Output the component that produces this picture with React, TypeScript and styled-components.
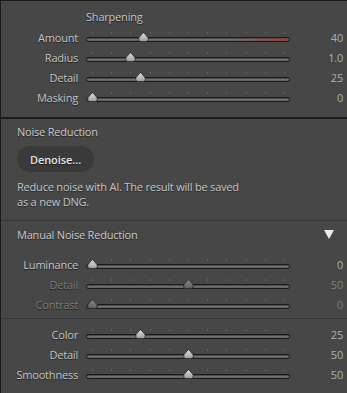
import React, { FC } from 'react';
import styled, { createGlobalStyle } from 'styled-components';

const fontFamily = '"Open Sans", "Noto Sans", Arial, sans-serif';
const panelBg = '#474747';
const edge = '#1c1c1c';
const labelColor = '#c2c5c9';
const dimColor = '#7c7c7c';
const valueColor = '#aab0b7';

const GlobalStyle = createGlobalStyle`
  html, body {
    margin: 0;
    padding: 0;
    background: ${panelBg};
  }
  body {
    font-family: ${fontFamily};
    -webkit-font-smoothing: antialiased;
  }
`;

const Panel = styled.div`
  width: 347px;
  height: 393px;
  box-sizing: border-box;
  border-left: 1px solid ${edge};
  border-top: 1px solid ${edge};
  background: ${panelBg};
  overflow: hidden;
  font-family: ${fontFamily};
  font-size: 11px;
  letter-spacing: -0.2px;
  color: ${labelColor};
`;

interface ISectionProps {
  pt: number;
  pb: number;
  divider?: 'heavy' | 'light';
}
const Section = styled.section<ISectionProps>`
  padding: ${p => p.pt}px 0 ${p => p.pb}px;
  border-bottom: ${p =>
    p.divider === 'heavy'
      ? `2px solid ${edge}`
      : p.divider === 'light'
      ? '1px solid #383838'
      : 'none'};
`;

const SubTitle = styled.div`
  height: 20px;
  line-height: 20px;
  padding-left: 85px;
  color: ${labelColor};
  text-shadow: 0 1px 1px rgba(0, 0, 0, 0.55);
`;

const Header = styled.div`
  display: flex;
  align-items: center;
  justify-content: space-between;
  height: 20px;
  padding: 0 13px 0 16px;
  color: #c9cbce;
  text-shadow: 0 1px 1px rgba(0, 0, 0, 0.5);
`;

const Caret = styled.span`
  width: 0;
  height: 0;
  border-left: 5px solid transparent;
  border-right: 5px solid transparent;
  border-top: 9px solid #ececec;
`;

const Row = styled.div`
  display: grid;
  grid-template-columns: 77px 204px 45px;
  column-gap: 8px;
  align-items: center;
  height: 20px;
`;

interface IDimProps {
  dim?: boolean;
}
const Label = styled.div<IDimProps>`
  text-align: right;
  color: ${p => (p.dim ? dimColor : labelColor)};
  text-shadow: 0 1px 1px rgba(0, 0, 0, 0.55);
  white-space: nowrap;
`;

const Value = styled.div<IDimProps>`
  text-align: right;
  color: ${p => (p.dim ? dimColor : valueColor)};
  white-space: nowrap;
`;

const SliderCell = styled.div`
  display: flex;
  flex-direction: column;
  height: 20px;
  padding-top: 5px;
  box-sizing: border-box;
`;

const Ticks = styled.div`
  display: flex;
  justify-content: space-between;
  height: 2px;
  padding: 0 5px 0 6px;
  margin-bottom: 3px;
`;

const Tick = styled.span`
  width: 1px;
  height: 2px;
  background: #626262;
`;

interface ITrackProps {
  tint?: boolean;
}
const Track = styled.div<ITrackProps>`
  position: relative;
  height: 5px;
  box-sizing: border-box;
  border: 1px solid #1a1a1a;
  border-radius: 3px;
  background: ${p =>
    p.tint
      ? 'linear-gradient(to right, rgba(0,0,0,0) 72%, rgba(150,50,50,0.7) 100%), linear-gradient(#383838, #787878 55%, #555)'
      : 'linear-gradient(#383838, #787878 55%, #555)'};
`;

const Thumb = styled.svg`
  position: absolute;
  top: -6px;
  width: 11px;
  height: 10px;
  margin-left: -5.5px;
`;

interface ISliderProps {
  frac: number;
  dim?: boolean;
  tint?: boolean;
}
const Slider: FC<ISliderProps> = ({ frac, dim, tint }) => (
  <SliderCell>
    <Ticks>
      {Array.from({ length: 11 }).map((_, i) => (
        <Tick key={i} />
      ))}
    </Ticks>
    <Track tint={tint}>
      <Thumb viewBox="0 0 11 10" style={{ left: 5 + frac * 193 }}>
        <defs>
          <linearGradient id={dim ? 'thd' : 'th'} x1="0" y1="0" x2="0" y2="1">
            <stop offset="0" stopColor={dim ? '#8a8a8a' : '#e2e2e2'} />
            <stop offset="1" stopColor={dim ? '#5e5e5e' : '#9c9c9c'} />
          </linearGradient>
        </defs>
        <path
          d="M5.5 0.4 C6.6 2.4 10.4 4.6 10.4 7 A2.6 2.6 0 0 1 7.8 9.6 H3.2 A2.6 2.6 0 0 1 0.6 7 C0.6 4.6 4.4 2.4 5.5 0.4 Z"
          fill={`url(#${dim ? 'thd' : 'th'})`}
          stroke="#262626"
          strokeWidth="0.8"
        />
      </Thumb>
    </Track>
  </SliderCell>
);

const Button = styled.button`
  display: block;
  height: 26px;
  width: 77px;
  margin: 5px 0 0 16px;
  padding: 0;
  border: none;
  border-radius: 13px;
  background: #3a3a3a;
  color: #e4e4e4;
  font-family: ${fontFamily};
  font-size: 11px;
  font-weight: 600;
  letter-spacing: -0.1px;
  text-shadow: 0 1px 1px rgba(0, 0, 0, 0.5);
`;

const Description = styled.p`
  margin: 7px 0 0 16px;
  line-height: 15px;
  color: #c4c6c9;
  text-shadow: 0 1px 1px rgba(0, 0, 0, 0.45);
`;

const Rows = styled.div<{ mt?: number }>`
  margin-top: ${p => p.mt || 0}px;
`;

interface ISliderRow {
  label: string;
  value: string;
  frac: number;
  dim?: boolean;
  tint?: boolean;
}

const sharpening: ISliderRow[] = [
  { label: 'Amount', value: '40', frac: 40 / 150, tint: true },
  { label: 'Radius', value: '1.0', frac: 0.2 },
  { label: 'Detail', value: '25', frac: 0.25 },
  { label: 'Masking', value: '0', frac: 0 }
];

const luminance: ISliderRow[] = [
  { label: 'Luminance', value: '0', frac: 0 },
  { label: 'Detail', value: '50', frac: 0.5, dim: true },
  { label: 'Contrast', value: '0', frac: 0, dim: true }
];

const color: ISliderRow[] = [
  { label: 'Color', value: '25', frac: 0.25 },
  { label: 'Detail', value: '50', frac: 0.5 },
  { label: 'Smoothness', value: '50', frac: 0.5 }
];

const SliderRows: FC<{ items: ISliderRow[] }> = ({ items }) => (
  <>
    {items.map(item => (
      <Row key={item.label}>
        <Label dim={item.dim}>{item.label}</Label>
        <Slider frac={item.frac} dim={item.dim} tint={item.tint} />
        <Value dim={item.dim}>{item.value}</Value>
      </Row>
    ))}
  </>
);

const App: FC = () => (
  <>
    <GlobalStyle />
    <Panel>
      <Section pt={6} pb={10} divider="heavy">
        <SubTitle>Sharpening</SubTitle>
        <SliderRows items={sharpening} />
      </Section>
      <Section pt={2} pb={11} divider="light">
        <Header>Noise Reduction</Header>
        <Button>Denoise…</Button>
        <Description>
          Reduce noise with AI. The result will be saved
          <br />
          as a new DNG.
        </Description>
      </Section>
      <Section pt={3} pb={4} divider="light">
        <Header>
          Manual Noise Reduction
          <Caret />
        </Header>
        <Rows mt={10}>
          <SliderRows items={luminance} />
        </Rows>
      </Section>
      <Section pt={5} pb={0}>
        <SliderRows items={color} />
      </Section>
    </Panel>
  </>
);

export default App;
